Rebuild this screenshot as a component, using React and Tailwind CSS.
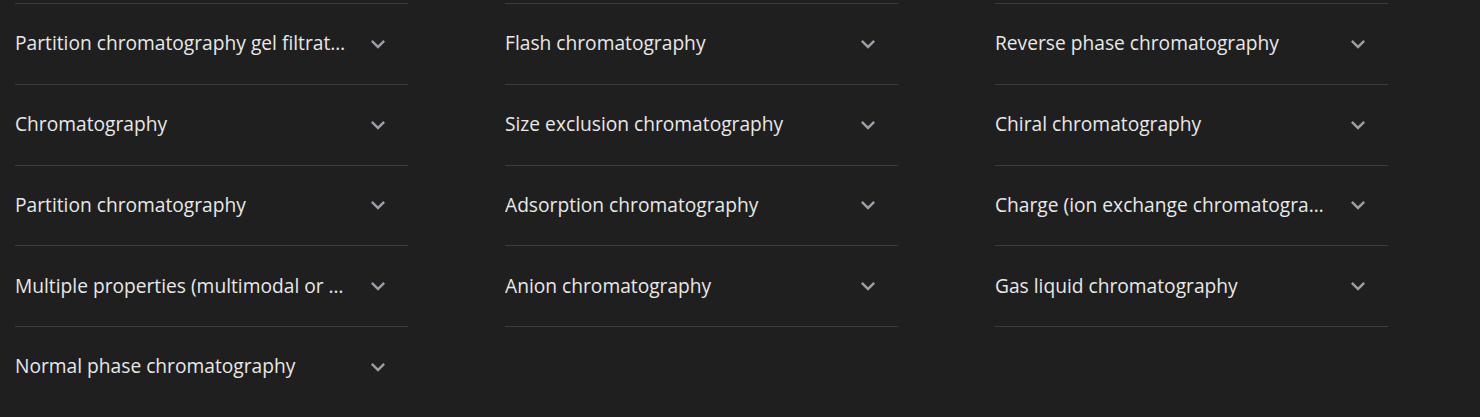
const columns = [
  [
    "Partition chromatography gel filtration",
    "Chromatography",
    "Partition chromatography",
    "Multiple properties (multimodal or mixed-mode chromatography)",
    "Normal phase chromatography",
  ],
  [
    "Flash chromatography",
    "Size exclusion chromatography",
    "Adsorption chromatography",
    "Anion chromatography",
  ],
  [
    "Reverse phase chromatography",
    "Chiral chromatography",
    "Charge (ion exchange chromatography)",
    "Gas liquid chromatography",
  ],
];

const Chevron = () => (
  <svg width="28" height="28" viewBox="0 0 24 24" className="shrink-0 text-[#9aa0a6]" fill="currentColor">
    <path d="M16.59 8.59 12 13.17 7.41 8.59 6 10l6 6 6-6z" />
  </svg>
);

const Item = ({ label }) => (
  <div className="flex h-[80.75px] items-center justify-between border-t border-[#3c3c3c] pr-4">
    <span className="min-w-0 truncate pr-[16px] text-[19.2px] text-[#e8e8e8]">{label}</span>
    <Chevron />
  </div>
);

export default function App() {
  return (
    <div className="min-h-[417px] bg-[#1f1f1f] pl-[15px] pt-[3px]" style={{ fontFamily: "'Open Sans', Roboto, sans-serif" }}>
      <div className="grid grid-cols-[393px_393px_393px] gap-x-[97px] items-start">
        {columns.map((col, i) => (
          <div key={i} className={i === 0 ? "" : "border-b border-[#3c3c3c]"}>
            {col.map((label) => (
              <Item key={label} label={label} />
            ))}
          </div>
        ))}
      </div>
    </div>
  );
}
